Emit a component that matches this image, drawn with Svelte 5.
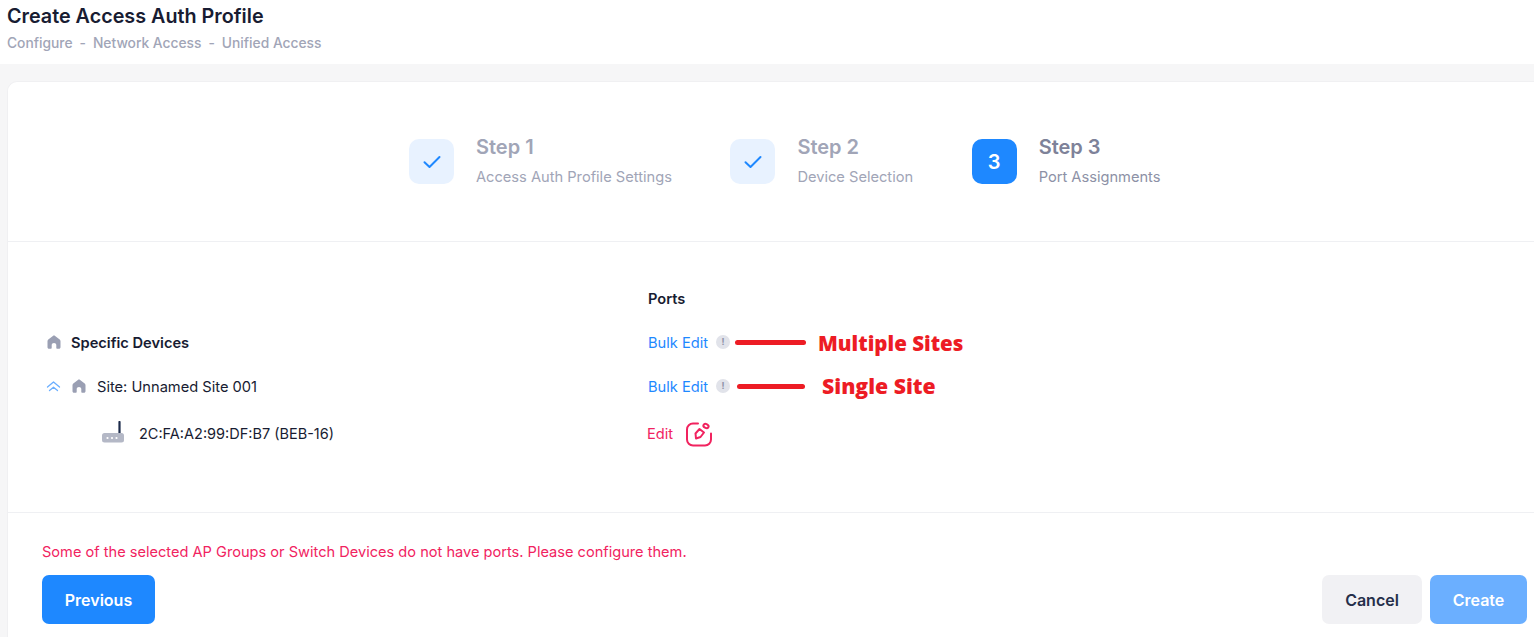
<script>
  const steps = [
    { title: 'Step 1', sub: 'Access Auth Profile Settings', done: true },
    { title: 'Step 2', sub: 'Device Selection', done: true },
    { title: 'Step 3', sub: 'Port Assignments', done: false, n: 3 }
  ];
</script>

{#snippet home()}
  <svg class="home" width="16" height="14" viewBox="0 0 16 14"><path fill="#9a9fb3" d="M8 .6c.4 0 .8.1 1.100.4l4.600 3.600c.5.4.8 1 .8 1.600v6c0 .9-.7 1.500-1.500 1.500h-1.700c-.6 0-1-.4-1-1V10c0-1.200-1-2.100-2.300-2.100S5.700 8.800 5.700 10v2.700c0 .6-.4 1-1 1H3c-.9 0-1.500-.6-1.500-1.500v-6c0-.6.3-1.200.8-1.600L6.900 1c.3-.3.700-.4 1.100-.4z"/></svg>
{/snippet}

{#snippet info()}
  <span class="info">!</span>
{/snippet}

<div class="page">
  <header>
    <h1>Create Access Auth Profile</h1>
    <nav>
      <span>Configure</span><i>-</i><span>Network Access</span><i>-</i><span>Unified Access</span>
    </nav>
  </header>

  <main>
    <section class="card">
      <div class="stepper">
        {#each steps as s}
          <div class="step" class:active={!s.done}>
            <div class="box">
              {#if s.done}
                <svg width="18" height="14" viewBox="0 0 18 14"><path d="M1.500 7.200l5 4.800L16.500 2" fill="none" stroke="#1e88ff" stroke-width="2" stroke-linecap="round" stroke-linejoin="round"/></svg>
              {:else}
                {s.n}
              {/if}
            </div>
            <div class="labels">
              <div class="title">{s.title}</div>
              <div class="sub">{s.sub}</div>
            </div>
          </div>
        {/each}
      </div>

      <div class="body">
        <div class="row head">
          <div class="left"></div>
          <div class="right ports">Ports</div>
        </div>
        <div class="row r1">
          <div class="left strong">{@render home()}<span>Specific Devices</span></div>
          <div class="right">
            <a href="#bulk1">Bulk Edit</a>{@render info()}
            <span class="line l1"></span><span class="note n1">Multiple Sites</span>
          </div>
        </div>
        <div class="row r2">
          <div class="left">
            <svg class="chev" width="15" height="12" viewBox="0 0 15 12"><path d="M1.500 7l6-5 6 5M3.500 10.500l4-3.300 4 3.300" fill="none" stroke="#6aaeff" stroke-width="1.300" stroke-linecap="round" stroke-linejoin="round"/></svg>
            {@render home()}<span>Site: Unnamed Site 001</span>
          </div>
          <div class="right">
            <a href="#bulk2">Bulk Edit</a>{@render info()}
            <span class="line l2"></span><span class="note n2">Single Site</span>
          </div>
        </div>
        <div class="row r3">
          <div class="left device">
            <svg width="24" height="22" viewBox="0 0 24 22"><path d="M18.500 1v11" stroke="#1c2a4a" stroke-width="2.200" stroke-linecap="round"/><rect x="1" y="12" width="22" height="9.500" rx="2.500" fill="#b4b8c6"/><circle cx="6.500" cy="17" r="1.100" fill="#fff"/><circle cx="11" cy="17" r="1.100" fill="#fff"/><circle cx="15.500" cy="17" r="1.100" fill="#fff"/></svg>
            <span>2C:FA:A2:99:DF:B7 (BEB-16)</span>
          </div>
          <div class="right edit">
            <a href="#edit">Edit</a>
            <svg width="28" height="28" viewBox="0 0 28 28" fill="none" stroke="#f1235f" stroke-width="2" stroke-linecap="round" stroke-linejoin="round">
              <path d="M13 4.500H8a6 6 0 0 0-6 6v10a6 6 0 0 0 6 6h12a6 6 0 0 0 6-6v-6"/>
              <path d="M14.500 10l4.500 3.500-3.500 4.500-4.500 1.500-.5-5z"/>
              <ellipse cx="21" cy="7" rx="2.700" ry="2" transform="rotate(30 21 7)"/>
            </svg>
          </div>
        </div>
      </div>

      <footer>
        <p class="error">Some of the selected AP Groups or Switch Devices do not have ports. Please configure them.</p>
        <div class="actions">
          <button class="primary prev">Previous</button>
          <div class="end">
            <button class="cancel">Cancel</button>
            <button class="create">Create</button>
          </div>
        </div>
      </footer>
    </section>
  </main>
</div>

<style>
  :global(body) { margin: 0; background: #f6f6f7; }
  .page {
    height: 637px; overflow: hidden; width: 1534px;
    display: flex; flex-direction: column;
    font-family: Inter, "Liberation Sans", sans-serif; color: #181c32;
    background: #f6f6f7;
  }
  header { height: 64px; background: #fff; padding-left: 7px; box-sizing: border-box; flex: none; }
  h1 { margin: 0; padding-top: 5px; font-size: 19.750px; font-weight: 600; line-height: 23px; color: #181c32; }
  nav { margin-top: 5px; font-size: 13.800px; font-weight: 500; line-height: 20px; color: #a1a5b7; display: flex; }
  nav i { font-style: normal; margin: 0 7px; }
  main { flex: 1; padding: 17px 0 0 7px; min-height: 0; }
  .card {
    width: 1527px; height: 556px; box-sizing: border-box;
    background: #fff; border: 1px solid #f0f0f2; border-right: 0; border-bottom: 0;
    border-radius: 10px 0 0 0;
    display: flex; flex-direction: column;
  }
  .stepper {
    height: 160px; flex: none; box-sizing: border-box; border-bottom: 1px solid #eff0f3;
    display: flex; padding: 57px 0 0 401px; gap: 58.500px;
  }
  .step { display: flex; gap: 22px; height: 46px; }
  .box {
    width: 45px; height: 45px; border-radius: 10px; background: #e8f2ff;
    display: flex; align-items: center; justify-content: center;
    font-weight: 600; font-size: 20px; color: #fff;
  }
  .active .box { background: #1e88ff; }
  .title { font-size: 20px; font-weight: 600; color: #a1a5b7; line-height: 24px; margin-top: -4px; }
  .active .title { color: #7e8299; }
  .sub { font-size: 14.650px; font-weight: 400; color: #a1a5b7; line-height: 20px; margin-top: 8px; }
  .active .sub { color: #8d91a6; }

  .body { height: 271px; flex: none; box-sizing: border-box; border-bottom: 1px solid #eff0f3; padding-top: 47px; }
  .row { display: flex; align-items: center; font-size: 14.650px; }
  .left { width: 640px; flex: none; box-sizing: border-box; padding-left: 38px; display: flex; align-items: center; }
  .head { height: 20px; }
  .ports { font-size: 14.600px; font-weight: 600; color: #181c32; }
  .r1 { height: 20px; margin-top: 24px; }
  .r2 { height: 20px; margin-top: 24px; }
  .r3 { height: 30px; margin-top: 21px; }
  .strong { font-weight: 600; }
  .home { margin: -2px 9px 0 0; flex: none; }
  .chev { margin: -2px 10px 0 0; flex: none; }
  .r2 .left { padding-left: 38px; }
  .r2 .home { margin-right: 10px; }
  .device { padding-left: 93px; font-size: 14.500px; }
  .device svg { margin-right: 14px; margin-top: -2px; }
  .right { display: flex; align-items: center; padding-left: 0; }
  a { color: #1e88ff; text-decoration: none; font-size: 14.650px; }
  .info {
    width: 14px; height: 14px; border-radius: 50%; background: #e1e3ea; color: #8d91a6;
    font-size: 9px; font-weight: 700; text-align: center; line-height: 14px;
    margin: -3px 0 0 8px; flex: none;
  }
  .line { height: 5px; border-radius: 2.500px; background: #ed1c24; flex: none; margin-top: -2px; }
  .l1 { width: 71px; margin-left: 5px; }
  .l2 { width: 68px; margin-left: 7px; }
  .note {
    font-family: "Open Sans", "Liberation Sans", sans-serif; font-weight: 800;
    font-size: 20.500px; color: #ed1c24; line-height: 24px; white-space: nowrap;
  }
  .n1 { margin-left: 12px; }
  .n2 { margin-left: 17px; margin-top: -2px; font-size: 21.200px; }
  .edit a { color: #f1235f; margin-top: 2px; }
  .edit { margin-left: -1px; }
  .edit svg { margin-left: 12px; }

  footer { padding: 29px 7px 0 34px; flex: none; }
  .error { margin: 0; font-size: 14.600px; line-height: 20px; color: #f1235f; }
  .actions { display: flex; justify-content: space-between; margin-top: 13px; }
  .end { display: flex; gap: 8px; }
  button {
    height: 49px; border: 0; border-radius: 7px; font-family: inherit;
    font-size: 16px; font-weight: 600; padding: 0;
  }
  .prev { width: 113px; background: #1e88ff; color: #fff; }
  .cancel { width: 100px; background: #f1f1f4; color: #252f4a; }
  .create { width: 97px; background: #6bafff; color: #fff; }
</style>
